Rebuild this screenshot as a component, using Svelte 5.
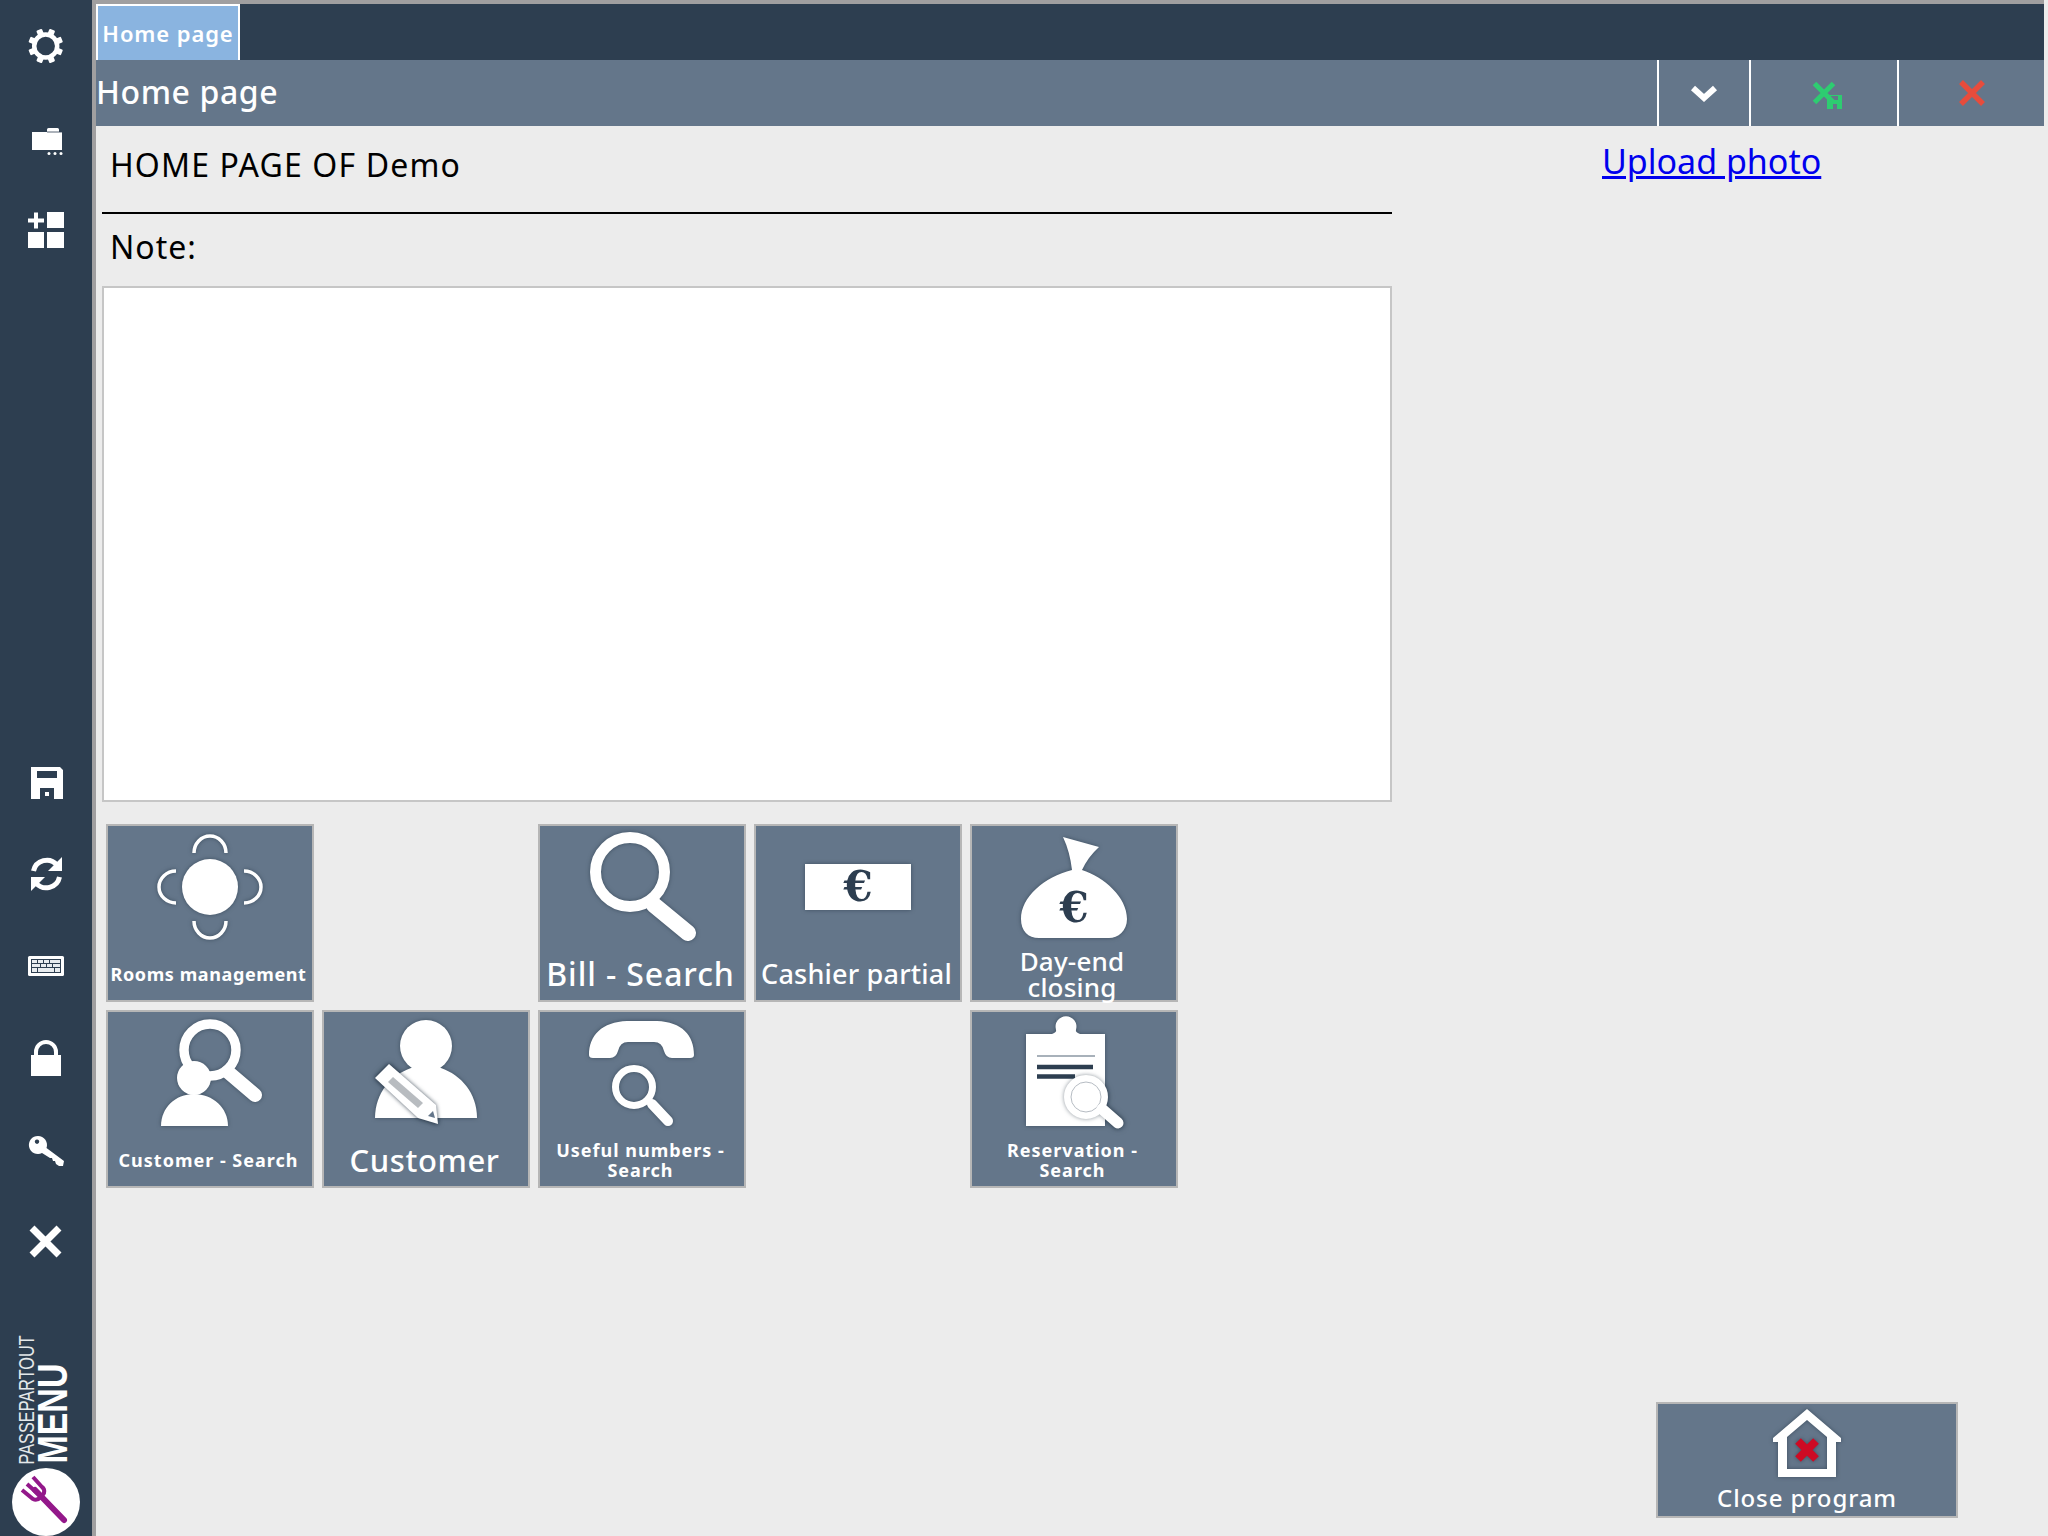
<script>
  const teeth = [0, 45, 90, 135, 180, 225, 270, 315];
</script>

{#snippet euro(x, y, size, color)}
  <text {x} {y} font-size={size} fill={color} text-anchor="middle" class="euro">€</text>
{/snippet}

<div class="shell">
  <aside class="side">
    <div class="group">
      <div class="slot">
        <svg viewBox="0 0 40 40" class="ic"><circle cx="19.7" cy="20" r="11.5" fill="none" stroke="#fff" stroke-width="4.5" />
          {#each teeth as t}<rect x="16.7" y="2.500" width="6" height="6" rx="1" fill="#fff" transform="rotate({t + 22.5} 19.7 20)" />{/each}
        </svg>
      </div>
      <div class="slot">
        <svg viewBox="0 0 40 40" class="ic"><path d="M21 14v-2.500q0-1.500 1.500-1.500h9q1.500 0 1.500 1.500V14h3v18H6V14z" fill="#fff" /><path d="M21 14h15" stroke="#2d3e50" stroke-width="0.800" /><circle cx="23" cy="35.500" r="1.500" fill="#fff" /><circle cx="29" cy="35.500" r="1.500" fill="#fff" /><circle cx="35" cy="35.500" r="1.500" fill="#fff" /></svg>
      </div>
      <div class="slot">
        <svg viewBox="0 0 40 40" class="ic"><path d="M2 10.500h16M10 2.500v16" stroke="#fff" stroke-width="4" /><path d="M21 2h17v16H21zM2 22h16v16H2zM21 22h17v16H21z" fill="#fff" /></svg>
      </div>
    </div>
    <div class="group bottom">
      <div class="slot">
        <svg viewBox="0 0 40 40" class="ic"><path fill-rule="evenodd" d="M5 5h29l3 3v29H28V26H14v11H5zM11 9v7h20V9zM19 30h4v4h-4z" fill="#fff" /></svg>
      </div>
      <div class="slot">
        <svg viewBox="0 0 40 40" class="ic"><path d="M7.500 17A13.500 13.500 0 0 1 31 11" fill="none" stroke="#fff" stroke-width="5" /><path d="M36 3v14H22z" fill="#fff" /><path d="M33.500 23A13.500 13.500 0 0 1 10 29" fill="none" stroke="#fff" stroke-width="5" /><path d="M5 37V23h14z" fill="#fff" /></svg>
      </div>
      <div class="slot">
        <svg viewBox="0 0 40 40" class="ic"><rect x="2" y="10" width="36" height="20" rx="1.500" fill="#fff" /><rect x="5" y="13" width="30" height="14" fill="#2d3e50" /><path d="M6 14h5v3H6zM12 14h5v3h-5zM18 14h5v3h-5zM24 14h10v3H24zM6 18h8v3H6zM15 18h5v3h-5zM21 18h5v3h-5zM27 18h7v3h-7zM6 22h5v4H6zM12 22h16v4H12zM29 22h5v4h-5z" fill="#e8ecef" /></svg>
      </div>
      <div class="slot">
        <svg viewBox="0 0 40 40" class="ic"><path d="M10 19v-5a10 10 0 0 1 20 0v5" fill="none" stroke="#fff" stroke-width="4" /><rect x="5" y="17" width="30" height="21" fill="#fff" /></svg>
      </div>
      <div class="slot">
        <svg viewBox="0 0 40 40" class="ic"><path fill-rule="evenodd" d="M12 6a9 9 0 0 1 8.500 12L38 31l-1 5-4 0-3-2-1-3-2 0-1-3-2 0-8-5A9 9 0 1 1 12 6zM11 9.500a2.200 2.200 0 1 0 .01 0z" fill="#fff" /></svg>
      </div>
      <div class="slot">
        <svg viewBox="0 0 40 40" class="ic"><path d="M6 6l27 27M33 6L6 33" stroke="#fff" stroke-width="7" /></svg>
      </div>
      <div class="logo">
        <div class="brand">
          <span class="pass">PASSEPARTOUT</span>
          <span class="menu">MENU</span>
        </div>
        <svg viewBox="0 0 68 68" class="disc"><circle cx="34" cy="34" r="34" fill="#fff" /><path d="M23 22L52 52" stroke="#93188a" stroke-width="6" stroke-linecap="round" /><path d="M10 22L21 31Q25 33 29 29L32 25Q33 21 30 19L21 9" fill="none" stroke="#93188a" stroke-width="4" /><path d="M15 16l10 9" stroke="#93188a" stroke-width="4" /></svg>
      </div>
    </div>
  </aside>

  <main class="main">
    <nav class="tabs"><span class="tab">Home page</span></nav>
    <header class="head">
      <h1>Home page</h1>
      <button class="hbtn chev" aria-label="Expand">
        <svg viewBox="0 0 30 20" width="30" height="20"><path d="M4 5l11 10L26 5" fill="none" stroke="#fff" stroke-width="6" /></svg>
      </button>
      <button class="hbtn save" aria-label="Save and close">
        <svg viewBox="0 0 30 28" width="30" height="28"><path d="M2.500 2.500l19 19M21.500 2.500l-19 19" stroke="#2ecc71" stroke-width="5" /><path fill-rule="evenodd" d="M15 14h15v14H15zM19 15v4h7v-4zM21 23v5h4v-5z" fill="#2ecc71" /></svg>
      </button>
      <button class="hbtn close" aria-label="Close">
        <svg viewBox="0 0 28 28" width="28" height="28"><path d="M3 3l22 22M25 3L3 25" stroke="#e74c3c" stroke-width="5.500" /></svg>
      </button>
    </header>

    <section class="content">
      <div class="left">
        <h2>HOME PAGE OF Demo</h2>
        <hr />
        <p class="note">Note:</p>
        <textarea class="notes" aria-label="Note"></textarea>
      </div>
      <a class="upload" href="#upload">Upload photo</a>
    </section>

    <div class="tiles">
      <button class="tile">
        <svg viewBox="0 0 120 120" class="art"><circle cx="60" cy="60" r="28" fill="#fff" /><path d="M44 26A16 17 0 0 1 76 26M44 94A16 17 0 0 0 76 94M26 44A17 16 0 0 0 26 76M94 44A17 16 0 0 1 94 76" fill="none" stroke="#fff" stroke-width="3.500" /></svg>
        <span class="lb s18 one">Rooms management</span>
      </button>
      <span class="gap"></span>
      <button class="tile">
        <svg viewBox="0 0 120 120" class="art"><circle cx="48" cy="45" r="34.500" fill="none" stroke="#fff" stroke-width="11" /><path d="M72 78l34 28" stroke="#fff" stroke-width="16" stroke-linecap="round" /></svg>
        <span class="lb s32">Bill - Search</span>
      </button>
      <button class="tile">
        <svg viewBox="0 0 120 120" class="art"><rect x="7" y="37" width="106" height="46" fill="#fff" />{@render euro(60, 74, 42, '#2d3e50')}</svg>
        <span class="lb s27">Cashier partial</span>
      </button>
      <button class="tile">
        <svg viewBox="0 0 120 120" class="art"><path d="M49 10L85 20Q74 30 68 43C90 50 113 70 113 92C113 104 104 111 95 111H25C14 111 7 104 7 92C7 70 30 50 58 43Q56 25 49 10Z" fill="#fff" />{@render euro(60, 95, 42, '#2d3e50')}</svg>
        <span class="lb s26">Day-end closing</span>
      </button>

      <button class="tile">
        <svg viewBox="0 0 120 120" class="art"><circle cx="60" cy="37" r="26" fill="none" stroke="#fff" stroke-width="9.500" /><path d="M78 59l27 23" stroke="#fff" stroke-width="14" stroke-linecap="round" /><circle cx="44" cy="65" r="17" fill="#fff" /><path d="M11 113C11 95 25 81 44 81C63 81 78 95 78 113Z" fill="#fff" /></svg>
        <span class="lb s18">Customer - Search</span>
      </button>
      <button class="tile">
        <svg viewBox="0 0 120 120" class="art"><circle cx="60" cy="33" r="26" fill="#fff" /><path d="M9 105C9 80 25 62 45 55H75C95 62 111 80 111 105Z" fill="#fff" /><g class="pencil"><path d="M9 65L23 51L70 92L72 111L52 105Z" fill="#fff" /><path d="M27 64L22 69L52 95L57 90Z" fill="#b8bcc0" /><path d="M62 103l7 2-2-7z" fill="#64768a" /></g></svg>
        <span class="lb s32 cust">Customer</span>
      </button>
      <button class="tile">
        <svg viewBox="0 0 120 120" class="art"><path d="M7 42C7 22 20 9 45 8H75C100 9 112 22 112 42Q112 45 108 45H90Q84 45 82 38Q80 29 72 29H46Q38 29 36 38Q34 45 28 45H11Q7 45 7 42Z" fill="#fff" /><circle cx="52" cy="74" r="18.500" fill="none" stroke="#fff" stroke-width="7" /><path d="M70 91l16 17" stroke="#fff" stroke-width="10" stroke-linecap="round" /></svg>
        <span class="lb s18">Useful numbers - Search</span>
      </button>
      <span class="gap"></span>
      <button class="tile">
        <svg viewBox="0 0 120 120" class="art"><path d="M12 21H38Q43 19 42 17A10.500 10.500 0 1 1 62 17Q61 19 66 21H91V113H12Z" fill="#fff" /><path d="M26 35H78" stroke="#fff" stroke-width="8" stroke-linecap="round" /><path d="M23 43H81" stroke="#8b97a3" stroke-width="1.500" /><path d="M23 54H79M23 63.500H61" stroke="#2d3e50" stroke-width="4.500" /><g class="glass"><circle cx="72" cy="84" r="18.500" fill="#fff" stroke="#fff" stroke-width="7" /><circle cx="72" cy="84" r="15" fill="#fff" stroke="#b6bcc3" stroke-width="1" /><path d="M88 96l16 14" stroke="#fff" stroke-width="11" stroke-linecap="round" /></g></svg>
        <span class="lb s18">Reservation - Search</span>
      </button>
    </div>

    <button class="exit">
      <svg viewBox="0 0 80 80" class="house"><path fill-rule="evenodd" d="M40 4L74 33V37H69V72H11V37H6V33ZM40 15L20 32V64H60V32Z" fill="#fff" /><path d="M31 36l18 18M49 36L31 54" stroke="#ce0a24" stroke-width="8" /></svg>
      <span class="exit-lb">Close program</span>
    </button>
  </main>
</div>

<style>
  :global(body) { margin: 0; background: #ececec; }
  .shell { display: flex; width: 2048px; height: 1536px; overflow: hidden; font-family: "Noto Sans", "Open Sans", sans-serif; }
  .side { width: 92px; flex: none; background: #2d3e50; border-right: 4px solid #a09fa0; display: flex; flex-direction: column; justify-content: space-between; }
  .slot { height: 92px; display: flex; align-items: center; justify-content: center; }
  .ic { width: 40px; height: 40px; }
  .logo { height: 248px; display: flex; flex-direction: column; justify-content: flex-end; align-items: flex-start; }
  .brand { display: flex; align-items: flex-end; height: 136px; padding-left: 17px; margin-bottom: 4px; color: #fff; font-family: "Liberation Sans", sans-serif; }
  .pass, .menu { writing-mode: vertical-rl; white-space: nowrap; transform-origin: 50% 100%; }
  .pass { font-size: 22px; line-height: 20px; color: #e4e8ea; transform: scaleY(0.74) translateY(-100%) rotate(180deg); }
  .menu { font-size: 43px; font-weight: 700; line-height: 30px; transform: scaleY(0.79) translateY(-100%) rotate(180deg); }
  .disc { width: 68px; height: 68px; margin-left: 12px; display: block; }

  .main { flex: 1; display: flex; flex-direction: column; padding-right: 4px; min-width: 0; }
  .tabs { border-top: 4px solid #a09fa0; background: #2d3e50; display: flex; height: 56px; }
  .tab { width: 144px; box-sizing: border-box; border: 2px solid #fff; border-bottom: 0; background: #8ab4e0; color: #fff; font-size: 22px; font-weight: 600; letter-spacing: 0.9px; display: flex; align-items: center; justify-content: center; white-space: nowrap; }
  .head { height: 66px; background: #64768a; display: flex; align-items: stretch; }
  .head h1 { margin: 0 auto 0 0; color: #fff; font-size: 32px; font-weight: 500; line-height: 64px; letter-spacing: 0.6px; }
  .hbtn { border: 0; border-left: 2px solid #fff; background: none; padding: 0; display: flex; align-items: center; justify-content: center; }
  .chev { width: 92px; }
  .save { width: 148px; padding: 4px 0 0 6px; }
  .close { width: 147px; }

  .content { display: flex; align-items: flex-start; padding-left: 6px; }
  .left { width: 1290px; flex: none; }
  .left h2 { margin: 0; height: 86px; box-sizing: border-box; padding: 14px 0 0 8px; color: #000; font-size: 32px; font-weight: 400; line-height: 50px; letter-spacing: 1.15px; }
  .left hr { margin: 0; border: 0; height: 2px; background: #000; }
  .note { margin: 0; height: 72px; box-sizing: border-box; padding: 8px 0 0 8px; color: #000; font-size: 32px; line-height: 50px; letter-spacing: 1px; }
  .notes { display: block; width: 100%; height: 516px; box-sizing: border-box; border: 2px solid #c6c6c6; background: #fff; resize: none; margin: 0; padding: 0; outline: 0; }
  .upload { margin: 10px 0 0 210px; color: #0000ee; font-size: 34px; line-height: 50px; text-decoration: underline; }

  .tiles { display: grid; grid-template-columns: repeat(5, 208px); grid-template-rows: repeat(2, 178px); gap: 8px; margin: 22px 0 0 10px; }
  .tile { box-sizing: border-box; border: 2px solid #b6b6b6; background: #64768a; padding: 1px 0 0; display: flex; flex-direction: column; align-items: center; color: #fff; font-family: inherit; min-width: 0; }
  .art { width: 120px; height: 120px; flex: none; filter: drop-shadow(0 0 2px rgba(30, 45, 60, 0.55)); }
  .art :global(.euro) { font-family: "DejaVu Serif", "Liberation Serif", serif; font-weight: 700; }
  .pencil { filter: drop-shadow(0 0 2px rgba(30, 45, 60, 0.8)); }
  .glass { filter: drop-shadow(0 0 2px rgba(30, 45, 60, 0.5)); }
  .lb { flex: 1; display: flex; align-items: center; justify-content: center; text-align: center; width: 100%; box-sizing: border-box; padding: 0 5px 0 2px; font-weight: 500; }
  .s18 { font-size: 18px; line-height: 20px; letter-spacing: 1px; font-weight: 700; }
  .one { white-space: nowrap; letter-spacing: 0.6px; padding: 0 3px 0 0; }
  .s26 { font-size: 26px; line-height: 26px; letter-spacing: 0.2px; padding: 0 44px 0 40px; }
  .s27 { font-size: 27px; line-height: 30px; letter-spacing: 0.2px; white-space: nowrap; }
  .s32 { font-size: 32px; line-height: 36px; letter-spacing: 0.9px; white-space: nowrap; }
  .cust { font-size: 31px; letter-spacing: 0.6px; }

  .exit { box-sizing: border-box; width: 302px; height: 116px; margin: auto 86px 18px auto; border: 2px solid #b6b6b6; background: #64768a; padding: 1px 0 0; display: flex; flex-direction: column; align-items: center; color: #fff; font-family: inherit; }
  .house { width: 80px; height: 80px; flex: none; filter: drop-shadow(0 0 2px rgba(30, 45, 60, 0.55)); }
  .exit-lb { font-size: 24px; font-weight: 500; line-height: 26px; letter-spacing: 0.9px; }
</style>
